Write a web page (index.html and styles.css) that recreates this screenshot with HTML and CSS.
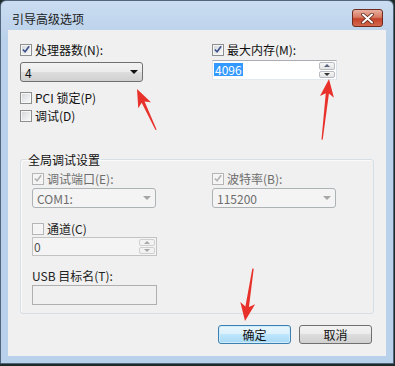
FILE: index.html
```html
<!DOCTYPE html>
<html>
<head>
    <meta charset="utf-8">
    <title>引导高级选项</title>
    <link rel="stylesheet" href="styles.css">
</head>
<body>
<div class="win">
    <div class="titlebar">
        <span class="title">引导高级选项</span>
        <span class="close">
            <svg width="13" height="11" viewBox="0 0 13 11"><path d="M2 1.5 L11 9.5 M11 1.5 L2 9.5" stroke="#5a2418" stroke-width="3.6" stroke-linecap="round"/><path d="M2 1.5 L11 9.5 M11 1.5 L2 9.5" stroke="#fff" stroke-width="2" stroke-linecap="round"/></svg>
        </span>
    </div>
    <div class="client">
        <div class="top">
            <div class="col">
                <label class="chk"><span class="box"><svg width="11" height="11" viewBox="0 0 11 11"><path d="M2 5.5 L4.5 8 L9 2" fill="none" stroke="#3e528c" stroke-width="1.8"/></svg></span>处理器数(N):</label>
                <div class="combo first"><span>4</span><i class="arrow"></i></div>
                <label class="chk pci"><span class="box"></span>PCI 锁定(P)</label>
                <label class="chk dbg"><span class="box"></span>调试(D)</label>
            </div>
            <div class="col">
                <label class="chk"><span class="box"><svg width="11" height="11" viewBox="0 0 11 11"><path d="M2 5.5 L4.5 8 L9 2" fill="none" stroke="#3e528c" stroke-width="1.8"/></svg></span>最大内存(M):</label>
                <div class="spin mem">
                    <span class="val"><span class="sel">4096</span></span>
                    <span class="spinbtns"><b><i class="up"></i></b><b><i class="down"></i></b></span>
                </div>
            </div>
        </div>

        <fieldset class="group">
            <legend>全局调试设置</legend>
            <div class="ggrid">
                <div class="col">
                    <label class="chk off"><span class="box"><svg width="11" height="11" viewBox="0 0 11 11"><path d="M2 5.5 L4.5 8 L9 2" fill="none" stroke="#b4b4b4" stroke-width="1.8"/></svg></span>调试端口(E):</label>
                    <div class="combo off"><span>COM1:</span><i class="arrow"></i></div>
                    <label class="chk off chan"><span class="box"></span><span class="dark">通道(C)</span></label>
                    <div class="spin off zero">
                        <span class="val">0</span>
                        <span class="spinbtns"><b><i class="up"></i></b><b><i class="down"></i></b></span>
                    </div>
                    <div class="usb">USB 目标名(T):</div>
                    <div class="textbox"></div>
                </div>
                <div class="col">
                    <label class="chk off"><span class="box"><svg width="11" height="11" viewBox="0 0 11 11"><path d="M2 5.5 L4.5 8 L9 2" fill="none" stroke="#b4b4b4" stroke-width="1.8"/></svg></span>波特率(B):</label>
                    <div class="combo off"><span>115200</span><i class="arrow"></i></div>
                </div>
            </div>
        </fieldset>

        <div class="btns">
            <span class="btn default">确定</span>
            <span class="btn">取消</span>
        </div>
    </div>
</div>

<!-- red marks drawn over the screenshot -->
<svg class="marks" width="395" height="366" viewBox="0 0 395 366">
    <g fill="#e8312b">
        <polygon transform="translate(137,89) rotate(-25)" points="0,0 7,18 1.6,14.5 0.6,45 -0.6,45 -1.6,14.5 -7,18"/>
        <polygon transform="translate(329,79) rotate(6.5)" points="0,0 7,18 1.6,14.5 0.6,61 -0.6,61 -1.6,14.5 -7,18"/>
        <polygon transform="translate(245,321) rotate(188.7)" points="0,0 7.5,18 1.8,14.5 0.7,53 -0.7,53 -1.8,14.5 -7.5,18"/>
    </g>
</svg>
</body>
</html>
```

FILE: styles.css
```css
* { box-sizing: border-box; }
body { margin: 0; position: relative; background: #1f2b2b; font: 12px/13px "Noto Sans CJK SC", "Liberation Sans", sans-serif; color: #111; }

.win { width: 394px; height: 364px; padding: 0 7px 7px; border: 1px solid #52667b; border-radius: 6px 6px 0 0; background: linear-gradient(#cadcf1, #b9d1ea 40px); }
.titlebar { height: 29px; display: flex; justify-content: space-between; align-items: flex-start; }
.title { margin: 11px 0 0 4px; color: #1b1b1b; }
.close { width: 31px; height: 18px; margin: 8px 3px 0 0; border: 1px solid #6e2b1f; border-radius: 3px; background: linear-gradient(#eab0a1, #d77a63 45%, #c4432b 55%, #d4684d); display: flex; align-items: center; justify-content: center; }

.client { height: 326px; padding: 13px 12px 0; background: #f0f0f0; }
.top { display: grid; grid-template-columns: 192px 1fr; }
.col { display: flex; flex-direction: column; align-items: flex-start; }

.chk { display: flex; align-items: center; gap: 3px; height: 13px; white-space: nowrap; }
.box { width: 12px; height: 12px; border: 1px solid #8e8f8f; background: linear-gradient(135deg, #d3d6da, #fbfbfb); box-shadow: inset 0 0 0 1px #f6f6f6; display: flex; align-items: center; justify-content: center; }
.chk.off { color: #6d6d6d; }
.chk.off .box { border-color: #b5b5b5; background: #f4f4f4; }
.chk .dark { color: #222; }
.pci { margin-top: 9px; }
.dbg { margin-top: 5px; }

.combo { width: 124px; height: 20px; margin-top: 3px; padding-left: 4px; border: 1px solid #707070; border-radius: 3px; background: linear-gradient(#f3f3f3, #ebebeb 50%, #dddddd 50%, #d0d0d0); display: flex; align-items: center; justify-content: space-between; }
.combo.first { width: 123px; margin-top: 6px; }
.combo .arrow { margin-right: 4px; border-left: 4px solid transparent; border-right: 4px solid transparent; border-top: 4px solid #111; }
.combo.off { border-color: #adb2b5; background: #f4f4f4; color: #6d6d6d; }
.combo.off .arrow { border-top-color: #a6a6a6; }

.spin { width: 125px; height: 20px; border: 1px solid; border-color: #abadb3 #dbdfe6 #e3e9ef #e2e3ea; background: #fff; display: flex; }
.spin.mem { margin-top: 4px; }
.spin .val { flex: 1; padding: 2px 0 0 1px; }
.sel { display: inline-block; padding: 0 1px; background: #3399ff; color: #fff; }
.spinbtns { width: 17px; padding: 1px 1px 1px 0; display: flex; flex-direction: column; gap: 1px; }
.spinbtns b { flex: 1; border: 1px solid #b8bcc2; border-radius: 2px; background: linear-gradient(#f7f7f7, #e3e3e3); display: flex; align-items: center; justify-content: center; }
.spinbtns .up { border-left: 3px solid transparent; border-right: 3px solid transparent; border-bottom: 3px solid #56627c; }
.spinbtns .down { border-left: 3px solid transparent; border-right: 3px solid transparent; border-top: 3px solid #333; }
.spin.off { height: 19px; margin-top: 2px; border-color: #c3c3c3; background: #f4f4f4; color: #555; }
.spin.off .spinbtns b { border-color: #d0d0d0; background: #f2f2f2; }
.spin.off .spinbtns .up { border-bottom-color: #a8a8a8; }
.spin.off .spinbtns .down { border-top-color: #a8a8a8; }

.group { margin: 31px 0 0; padding: 6px 11px 8px; min-width: 0; border: 1px solid #d5dfe5; border-radius: 3px; box-shadow: inset 1px 1px #fbfbfb; }
.group legend { margin-left: -5px; padding: 0 1px; color: #111; }
.ggrid { display: grid; grid-template-columns: 180px 1fr; }
.chan { margin-top: 14px; }
.usb { margin-top: 13px; color: #222; }
.textbox { width: 125px; height: 20px; margin-top: 3px; border: 1px solid #afafaf; background: #f0f0f0; }

.btns { display: flex; justify-content: flex-end; gap: 8px; margin: 11px 2px 0 0; }
.btn { width: 73px; height: 19px; border: 1px solid #707070; border-radius: 3px; background: linear-gradient(#f3f3f3, #ebebeb 50%, #dddddd 50%, #d0d0d0); display: flex; align-items: center; justify-content: center; }
.btn.default { border-color: #3c7fb1; background: linear-gradient(#eaf6fd, #d9f0fc 50%, #bee6fd 50%, #a7d9f5); box-shadow: inset 0 0 0 1px #d0ecfb; }

.marks { position: absolute; left: 0; top: 0; pointer-events: none; }
```
